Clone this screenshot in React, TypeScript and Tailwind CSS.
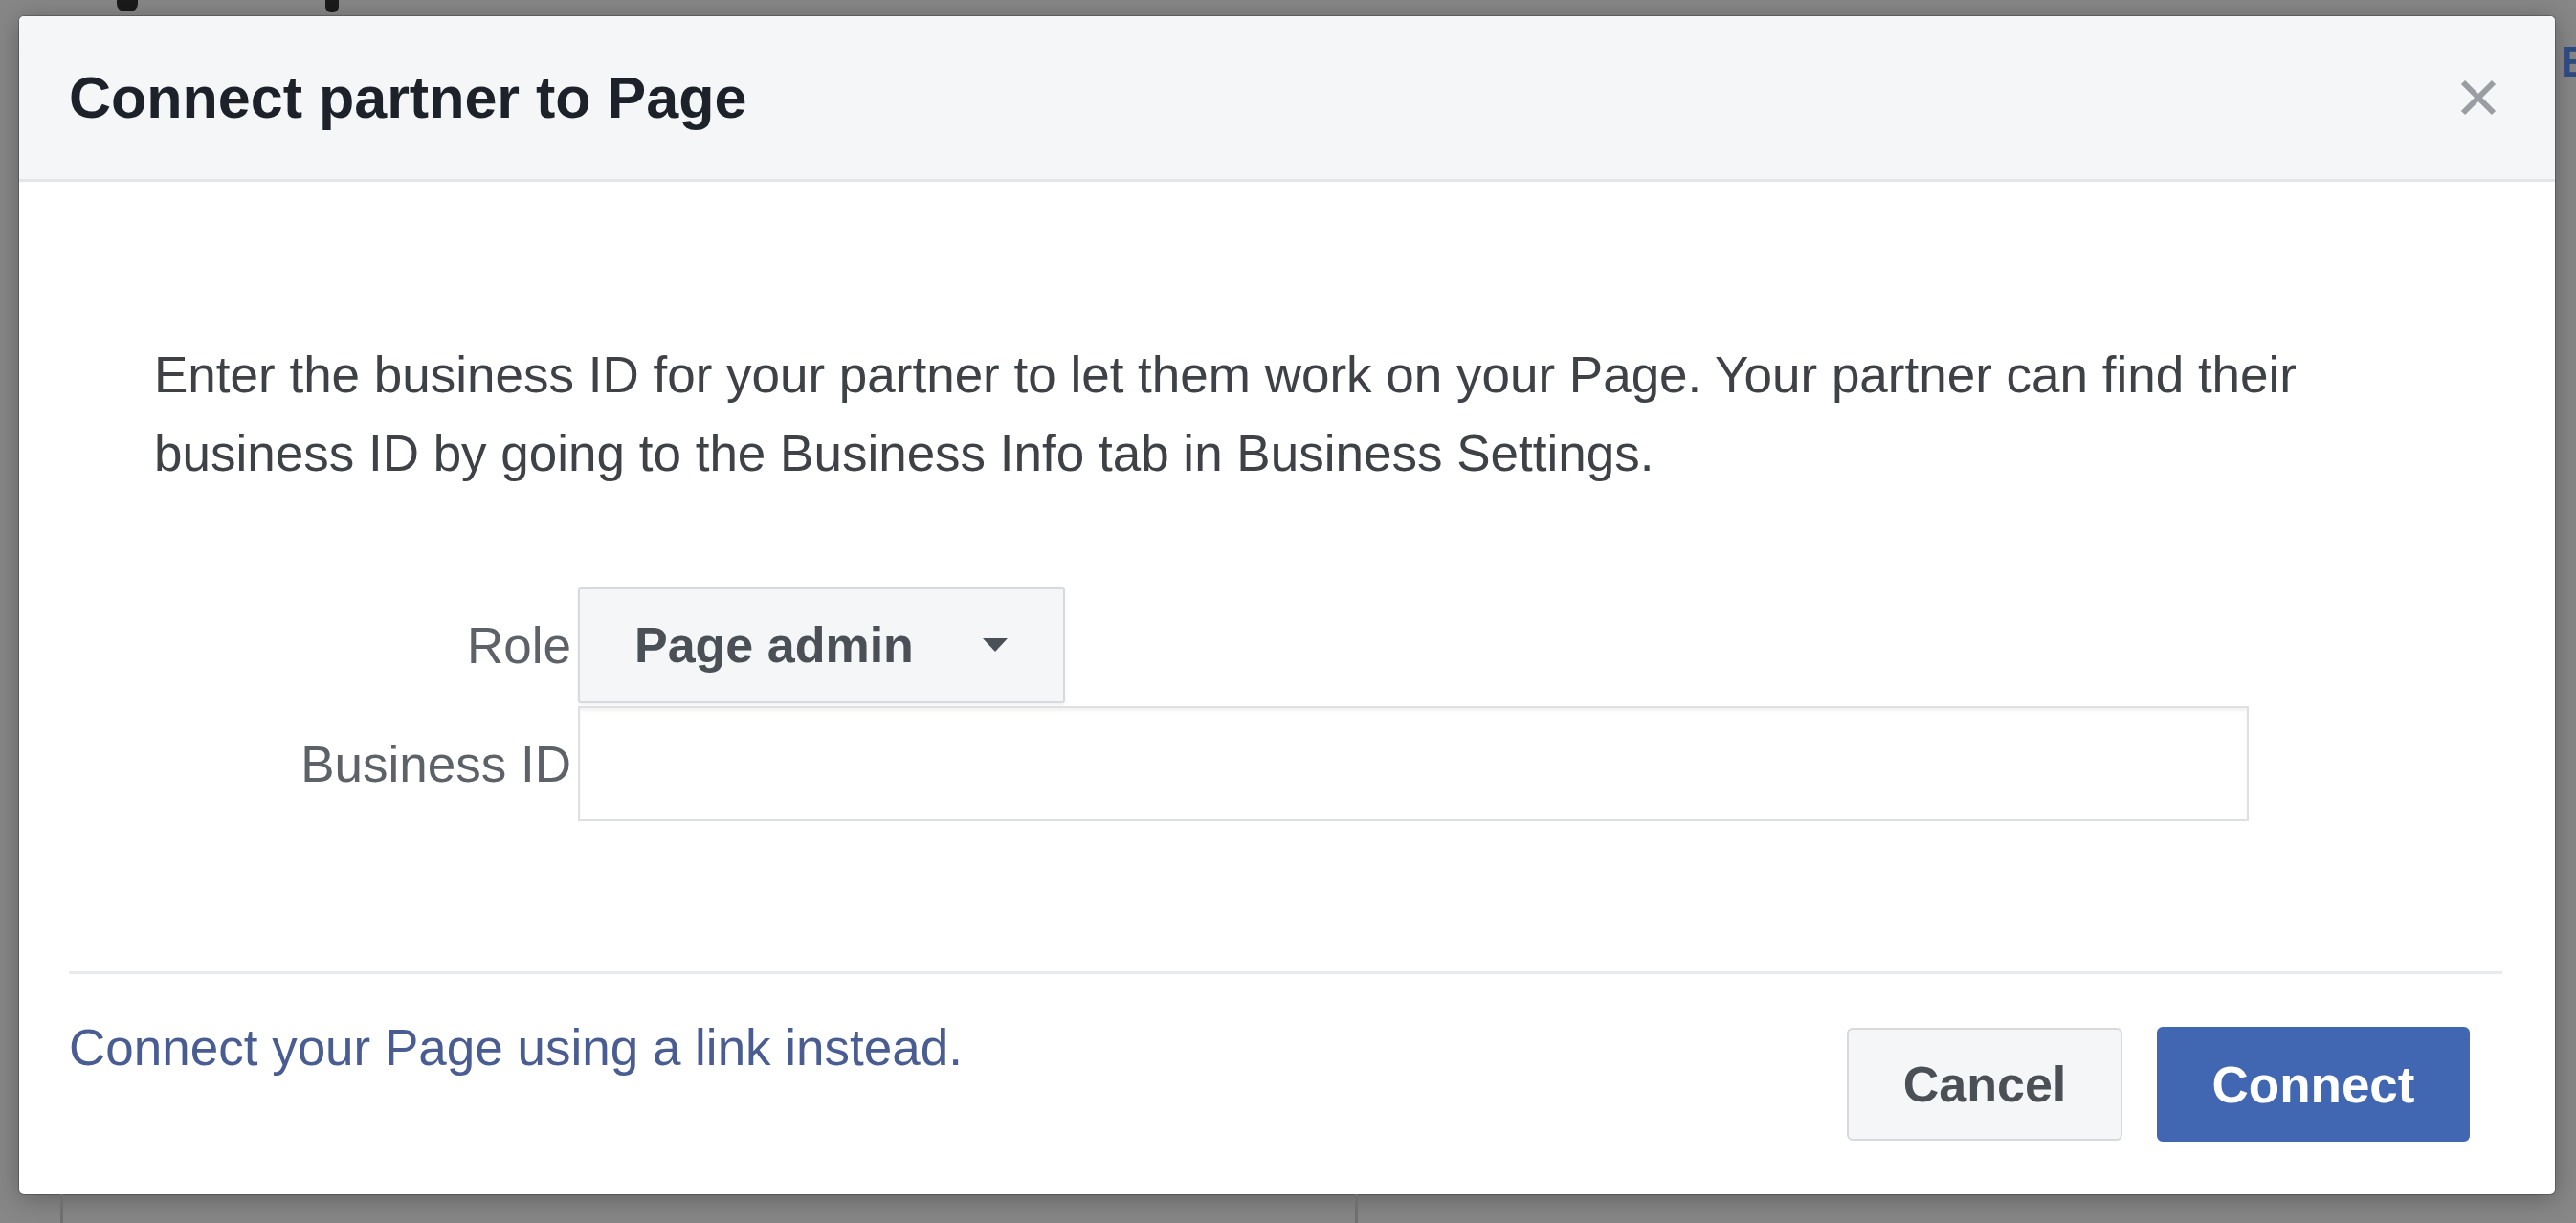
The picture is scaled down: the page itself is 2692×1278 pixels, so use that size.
import React from "react";

// ---------------------------------------------------------------------------
// Small drawings
// ---------------------------------------------------------------------------

function CloseIcon() {
  return (
    <svg width="40" height="40" viewBox="0 0 40 40" aria-hidden="true">
      <path d="M4 4 L36 36 M36 4 L4 36" stroke="#9a9da2" strokeWidth="6" strokeLinecap="butt" />
    </svg>
  );
}

function Caret() {
  return (
    <svg width="26" height="14" viewBox="0 0 26 14" aria-hidden="true">
      <path d="M0 0 H26 L13 14 Z" fill="#4b4f56" />
    </svg>
  );
}

// ---------------------------------------------------------------------------
// Dialog
// ---------------------------------------------------------------------------

function ConnectPartnerDialog() {
  return (
    <div className="ml-[20px] w-[2650px] h-[1231px] shrink-0 bg-white rounded-[5px] overflow-hidden flex flex-col shadow-[0_0_0_1px_rgba(0,0,0,0.22),0_4px_28px_rgba(0,0,0,0.3)]">
      {/* Header */}
      <div className="h-[173px] shrink-0 bg-[#f5f6f7] border-b-[3px] border-[#e5e5e5] flex items-center justify-between pl-[52px] pr-[60px]">
        <h1 className="text-[61px] leading-none font-bold text-[#1d2129]">Connect partner to Page</h1>
        <button className="flex items-center justify-center">
          <CloseIcon />
        </button>
      </div>

      {/* Body */}
      <div className="pl-[141px] pt-[161px]">
        <p className="w-[2320px] text-[53px] leading-[82px] text-[#3e4146]">
          Enter the business ID for your partner to let them work on your Page. Your partner can find their business ID by going to the Business Info tab in Business Settings.
        </p>

        <div className="mt-[98px] flex flex-col gap-[3px]">
          <div className="flex items-center">
            <span className="w-[436px] text-right text-[53px] leading-none text-[#5d6168]">Role</span>
            <button className="ml-[7px] w-[509px] h-[122px] flex items-center pl-[57px] bg-[#f5f6f7] border-2 border-[#d6d9dd] rounded-[3px] shadow-[0_2px_3px_rgba(0,0,0,0.06)]">
              <span className="text-[52px] leading-none font-bold text-[#4b4f56]">Page admin</span>
              <span className="ml-[72px] flex">
                <Caret />
              </span>
            </button>
          </div>
          <div className="flex items-center">
            <span className="w-[436px] text-right text-[53px] leading-none text-[#5d6168]">Business ID</span>
            <input
              type="text"
              className="ml-[7px] w-[1746px] h-[120px] bg-white border-2 border-[#dddfe2] shadow-[inset_0_3px_3px_rgba(0,0,0,0.05)] outline-none px-[20px] text-[53px]"
            />
          </div>
        </div>
      </div>

      {/* Divider */}
      <div className="mt-[157px] ml-[52px] mr-[55px] h-[3px] shrink-0 bg-[#e9eaed]" />

      {/* Footer */}
      <div className="flex items-start justify-between pl-[52px] pr-[89px]">
        <a className="mt-[46px] text-[53px] leading-[61px] text-[#4a5d92]">Connect your Page using a link instead.</a>
        <div className="mt-[55px] flex items-center gap-[36px]">
          <button className="w-[288px] h-[118px] bg-[#f5f6f7] border-2 border-[#d7d9dd] rounded-[6px] text-[52px] leading-none font-bold text-[#4b4f56]">
            Cancel
          </button>
          <button className="w-[327px] h-[120px] bg-[#4267b2] border-2 border-[#4267b2] rounded-[6px] text-[53px] leading-none font-bold text-white">
            Connect
          </button>
        </div>
      </div>
    </div>
  );
}

// ---------------------------------------------------------------------------
// Page
// ---------------------------------------------------------------------------

export default function App() {
  return (
    <div className="w-[2692px] h-[1278px] overflow-hidden bg-[#878787] flex flex-col font-['Liberation_Sans',Arial,sans-serif]">
      {/* remnants of the page behind the backdrop */}
      <div className="h-[17px] shrink-0 flex items-start">
        <div className="ml-[122px] w-[22px] h-[12px] bg-[#1a1a1a] rounded-b-[8px]" />
        <div className="ml-[196px] w-[14px] h-[13px] bg-[#1a1a1a] rounded-b-[6px]" />
      </div>

      <div className="flex shrink-0">
        <ConnectPartnerDialog />
        <div className="flex-1 overflow-hidden pl-[6px] pt-[26px]">
          <span className="text-[44px] leading-none font-bold text-[#2b4a80]">B</span>
        </div>
      </div>

      <div className="flex-1 flex">
        <div className="ml-[63px] w-[3px] bg-[#6f6f6f]" />
        <div className="ml-[1350px] w-[3px] bg-[#6f6f6f]" />
      </div>
    </div>
  );
}
